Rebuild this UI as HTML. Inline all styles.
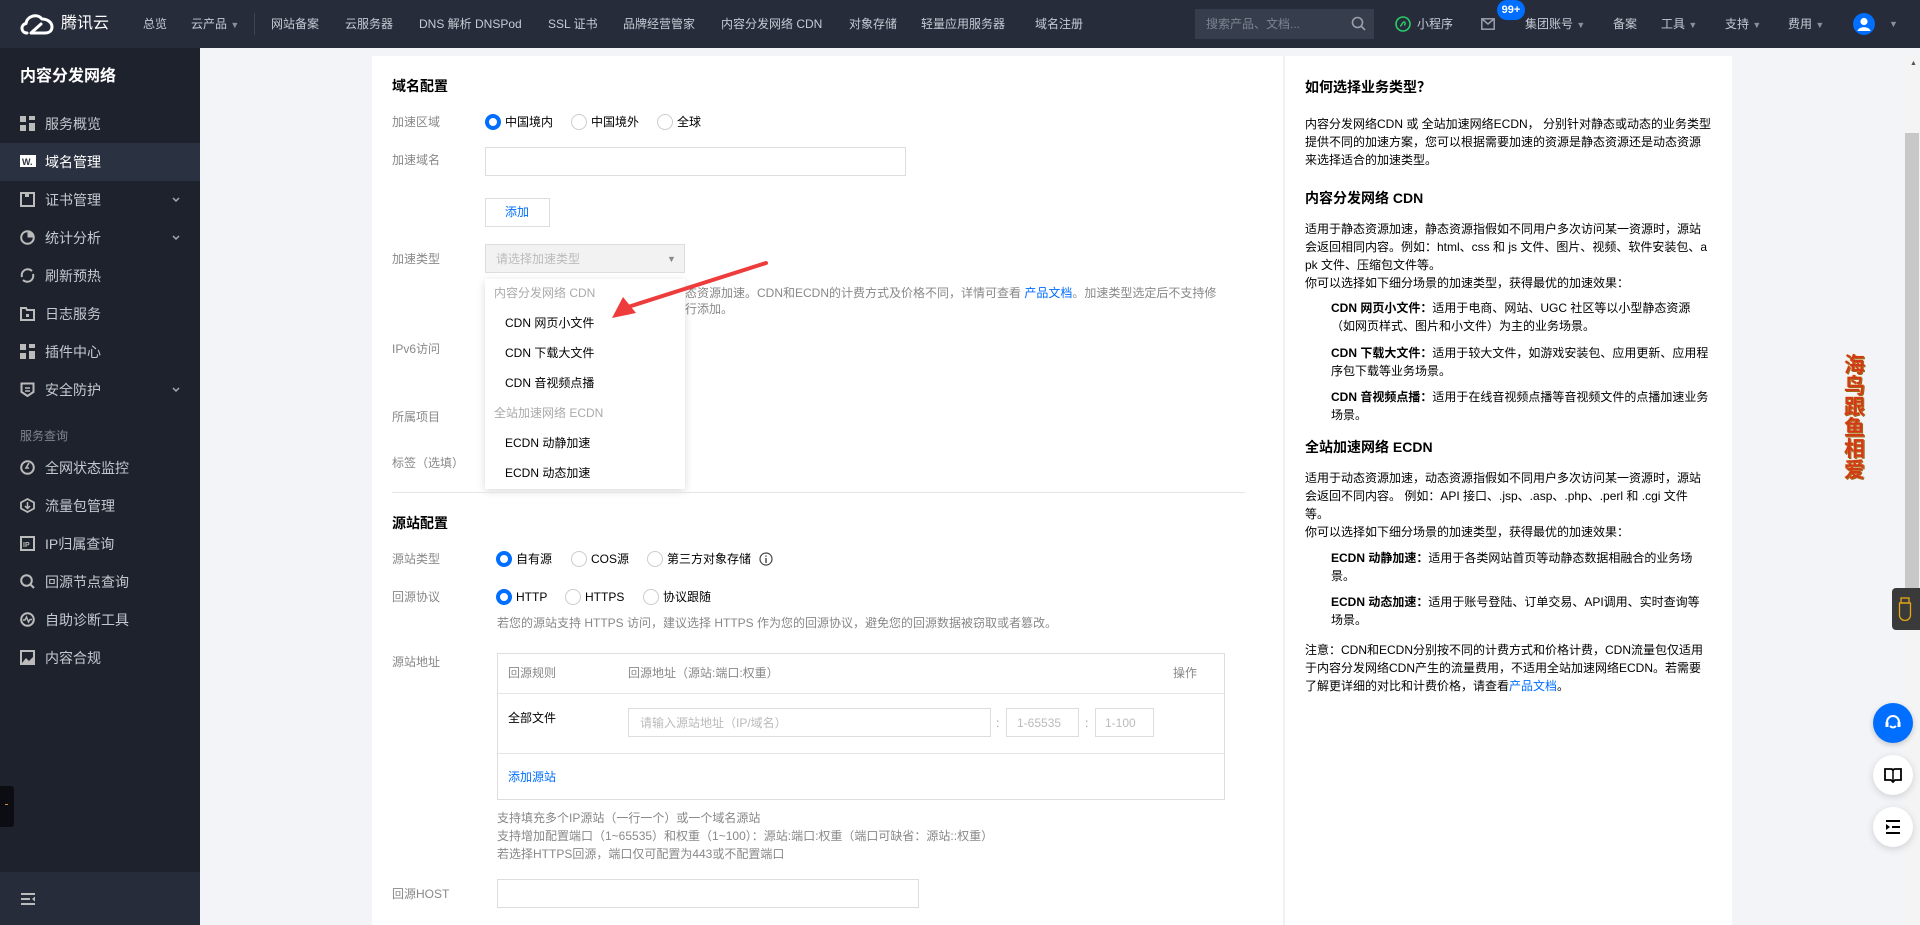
<!DOCTYPE html>
<html><head><meta charset="utf-8">
<style>
*{margin:0;padding:0;box-sizing:border-box}
body{width:1920px;height:925px;overflow:hidden;background:#f2f4f8;font-family:"Liberation Sans","Noto Sans CJK SC",sans-serif;font-size:12px;color:#000;position:relative}
.a{position:absolute;white-space:nowrap}
.top{position:absolute;left:0;top:0;width:1920px;height:48px;background:#262c3a}
.nv{position:absolute;top:17px;font-size:12px;color:#c6cad3;line-height:14px;white-space:nowrap}
.side{position:absolute;left:0;top:48px;width:200px;height:877px;background:#1e222d}
.si{position:absolute;left:0;width:200px;height:38px;color:#c4c8d0;font-size:14px;line-height:38px}
.si span{position:absolute;left:45px}
.si svg{position:absolute;left:20px;top:11px}
.si svg.ch{left:172px;top:16px}
.lbl{position:absolute;left:392px;color:#888;font-size:12px;line-height:14px;white-space:nowrap}
.rad{position:absolute;width:16px;height:16px;border:1px solid #ccc;border-radius:50%;background:#fff}
.rad.on{border:4px solid #006eff}
.rt{position:absolute;font-size:12px;line-height:14px;color:#000;white-space:nowrap}
.inp{position:absolute;border:1px solid #ddd;background:#fff}
.hp{position:absolute;left:1305px;font-size:12px;line-height:18px;color:#000;white-space:nowrap}
.hh{position:absolute;left:1305px;font-size:14px;font-weight:bold;color:#000;white-space:nowrap}
.dd{position:absolute;left:505px;font-size:12px;color:#000;white-space:nowrap;line-height:14px}
.ddg{position:absolute;left:494px;font-size:12px;color:#aaa;white-space:nowrap;line-height:14px}
.note{position:absolute;left:497px;font-size:12px;color:#888;white-space:nowrap;line-height:14px}
</style></head><body>

<div class="top"></div>
<svg class="a" style="left:19px;top:12px" width="36" height="24" viewBox="0 0 36 24"><path d="M8 21 C2 21 1 13 7 11.5 C8 4 18 1 23 7 C28 7 33 10 33 15 C33 19 30 21 26 21 L12 21 L22 12" fill="none" stroke="#fff" stroke-width="3" stroke-linecap="round" stroke-linejoin="round"/></svg>
<div class="a" style="left:61px;top:14px;color:#fff;font-size:16px;line-height:20px">腾讯云</div>
<div class="nv" style="left:143px">总览</div>
<div class="nv" style="left:191px">云产品 <span style="font-size:9px;color:#8a909b">▼</span></div>
<div class="a" style="left:254px;top:13px;width:1px;height:22px;background:#3e4553"></div>
<div class="nv" style="left:271px">网站备案</div>
<div class="nv" style="left:345px">云服务器</div>
<div class="nv" style="left:419px">DNS 解析 DNSPod</div>
<div class="nv" style="left:548px">SSL 证书</div>
<div class="nv" style="left:623px">品牌经营管家</div>
<div class="nv" style="left:721px">内容分发网络 CDN</div>
<div class="nv" style="left:849px">对象存储</div>
<div class="nv" style="left:921px">轻量应用服务器</div>
<div class="nv" style="left:1035px">域名注册</div>
<div class="a" style="left:1195px;top:9px;width:179px;height:30px;background:#363d4c"></div>
<div class="nv" style="left:1206px;color:#7d8491">搜索产品、文档...</div>
<svg class="a" style="left:1351px;top:16px" width="15" height="15" viewBox="0 0 15 15"><circle cx="6.5" cy="6.5" r="5" fill="none" stroke="#9aa0aa" stroke-width="1.6"/><path d="M10 10 L14 14" stroke="#9aa0aa" stroke-width="1.6"/></svg>
<svg class="a" style="left:1395px;top:16px" width="16" height="16" viewBox="0 0 16 16"><circle cx="8" cy="8" r="7" fill="none" stroke="#29cc6a" stroke-width="1.6"/><path d="M5 10 C7 10 7 6 9 6 C10.5 6 10.5 9 9 9" fill="none" stroke="#29cc6a" stroke-width="1.4"/></svg>
<div class="nv" style="left:1417px">小程序</div>
<svg class="a" style="left:1481px;top:18px" width="14" height="12" viewBox="0 0 14 12"><rect x="0.8" y="0.8" width="12.4" height="10.4" fill="none" stroke="#9aa0aa" stroke-width="1.5"/><path d="M1 1 L7 6 L13 1" fill="none" stroke="#9aa0aa" stroke-width="1.5"/></svg>
<div class="a" style="left:1497px;top:0px;width:28px;height:20px;border-radius:10px;background:#006eff;color:#fff;font-size:11px;font-weight:bold;line-height:20px;text-align:center">99+</div>
<div class="nv" style="left:1525px">集团账号 <span style="font-size:9px;color:#8a909b">▼</span></div>
<div class="nv" style="left:1613px">备案</div>
<div class="nv" style="left:1661px">工具 <span style="font-size:9px;color:#8a909b">▼</span></div>
<div class="nv" style="left:1725px">支持 <span style="font-size:9px;color:#8a909b">▼</span></div>
<div class="nv" style="left:1788px">费用 <span style="font-size:9px;color:#8a909b">▼</span></div>
<svg class="a" style="left:1853px;top:13px" width="22" height="22" viewBox="0 0 22 22"><circle cx="11" cy="11" r="11" fill="#006eff"/><circle cx="11" cy="8.5" r="3.6" fill="#fff"/><path d="M4.5 18 C5.5 13 16.5 13 17.5 18 Z" fill="#fff"/></svg>
<div class="nv" style="left:1889px;font-size:9px;color:#8a909b">▼</div>

<div class="side"></div>
<div class="a" style="left:20px;top:66px;color:#fff;font-size:16px;font-weight:bold;line-height:22px">内容分发网络</div>
<div class="si" style="top:105px"><svg width="15" height="15"><rect x="0" y="0" width="6" height="6" fill="#bbb"/><rect x="9" y="0" width="6" height="4" fill="#bbb"/><rect x="0" y="9" width="6" height="6" fill="#bbb"/><rect x="9" y="7" width="6" height="8" fill="#bbb"/></svg><span>服务概览</span></div>
<div class="si" style="top:143px;background:#2a3140;color:#fff"><svg width="16" height="15"><rect x="0" y="1" width="16" height="12" fill="#fff"/><text x="2" y="11" font-size="9" font-weight="bold" fill="#2a3140" font-family="Liberation Sans">W.</text></svg><span>域名管理</span></div>
<div class="si" style="top:181px"><svg width="15" height="15"><rect x="1" y="1" width="13" height="13" fill="none" stroke="#bbb" stroke-width="2"/><rect x="5" y="1" width="4" height="4" fill="#bbb"/></svg><span>证书管理</span><svg class="ch" width="8" height="6"><path d="M1 1 L4 4 L7 1" fill="none" stroke="#aaa" stroke-width="1.5"/></svg></div>
<div class="si" style="top:219px"><svg width="15" height="15"><circle cx="7.5" cy="7.5" r="6.3" fill="none" stroke="#bbb" stroke-width="2"/><path d="M7.5 7.5 L7.5 1 A6.5 6.5 0 0 1 14 7.5Z" fill="#bbb"/></svg><span>统计分析</span><svg class="ch" width="8" height="6"><path d="M1 1 L4 4 L7 1" fill="none" stroke="#aaa" stroke-width="1.5"/></svg></div>
<div class="si" style="top:257px"><svg width="15" height="15"><path d="M2 9 A6 6 0 0 1 12 3 M13 6 A6 6 0 0 1 3 12" fill="none" stroke="#bbb" stroke-width="2"/></svg><span>刷新预热</span></div>
<div class="si" style="top:295px"><svg width="15" height="15"><path d="M1 2 H6 L7 4 H14 V14 H1Z" fill="none" stroke="#bbb" stroke-width="2"/><rect x="6" y="8" width="3" height="3" fill="#bbb"/></svg><span>日志服务</span></div>
<div class="si" style="top:333px"><svg width="15" height="15"><rect x="0" y="0" width="6" height="6" fill="#bbb"/><rect x="9" y="0" width="6" height="4" fill="#bbb"/><rect x="0" y="9" width="6" height="6" fill="#bbb"/><rect x="9" y="7" width="6" height="8" fill="#bbb"/></svg><span>插件中心</span></div>
<div class="si" style="top:371px"><svg width="15" height="15"><path d="M1.5 1.5 H13.5 V10 L7.5 14 L1.5 10Z" fill="none" stroke="#bbb" stroke-width="2"/><path d="M5 6 H10 M5 9 H10" stroke="#bbb" stroke-width="1.5"/></svg><span>安全防护</span><svg class="ch" width="8" height="6"><path d="M1 1 L4 4 L7 1" fill="none" stroke="#aaa" stroke-width="1.5"/></svg></div>
<div class="a" style="left:20px;top:428px;color:#7f8590;font-size:12px;line-height:16px">服务查询</div>
<div class="si" style="top:449px"><svg width="15" height="15"><circle cx="7.5" cy="7.5" r="6.3" fill="none" stroke="#bbb" stroke-width="2"/><path d="M9 3 L6 8 H9" fill="none" stroke="#bbb" stroke-width="1.6"/></svg><span>全网状态监控</span></div>
<div class="si" style="top:487px"><svg width="15" height="15"><path d="M7.5 1 L14 4.5 V10.5 L7.5 14 L1 10.5 V4.5Z" fill="none" stroke="#bbb" stroke-width="1.8"/><path d="M7.5 4 V10 M5 8 L7.5 10.5 L10 8" fill="none" stroke="#bbb" stroke-width="1.5"/></svg><span>流量包管理</span></div>
<div class="si" style="top:525px"><svg width="15" height="15"><rect x="1" y="1" width="13" height="13" fill="none" stroke="#bbb" stroke-width="2"/><text x="3" y="11" font-size="7" font-weight="bold" fill="#bbb" font-family="Liberation Sans">IP</text></svg><span>IP归属查询</span></div>
<div class="si" style="top:563px"><svg width="15" height="15"><circle cx="6.5" cy="6.5" r="5.3" fill="none" stroke="#bbb" stroke-width="2"/><path d="M10.5 10.5 L14 14" stroke="#bbb" stroke-width="2"/></svg><span>回源节点查询</span></div>
<div class="si" style="top:601px"><svg width="15" height="15"><circle cx="7.5" cy="7.5" r="6.3" fill="none" stroke="#bbb" stroke-width="2"/><path d="M3 8 H5 L6.5 5 L8.5 10 L10 7.5 H12" fill="none" stroke="#bbb" stroke-width="1.4"/></svg><span>自助诊断工具</span></div>
<div class="si" style="top:639px"><svg width="15" height="15"><rect x="1" y="1" width="13" height="13" fill="none" stroke="#bbb" stroke-width="2"/><path d="M2 13 L6 8 L9 11 L13 7 V13Z" fill="#bbb"/></svg><span>内容合规</span></div>
<div class="a" style="left:0;top:786px;width:14px;height:41px;background:#0b0d12;border-radius:0 3px 3px 0"></div>
<div class="a" style="left:5px;top:804px;width:3px;height:1px;background:#d98c3a"></div>
<div class="a" style="left:0;top:872px;width:200px;height:53px;background:#262c39"></div>
<svg class="a" style="left:20px;top:892px" width="16" height="14"><path d="M1 2 H15 M1 7 H10 M1 12 H15" stroke="#bbb" stroke-width="2"/><path d="M15 4.5 L12 7 L15 9.5Z" fill="#bbb"/></svg>

<!-- card -->
<div class="a" style="left:372px;top:56px;width:1360px;height:869px;background:#fff"></div>
<div class="a" style="left:1283px;top:56px;width:2px;height:869px;background:#f0f1f4"></div>

<div class="a" style="left:392px;top:77px;font-size:14px;font-weight:bold;line-height:18px">域名配置</div>
<div class="lbl" style="top:115px">加速区域</div>
<div class="rad on" style="left:485px;top:114px"></div><div class="rt" style="left:505px;top:115px">中国境内</div>
<div class="rad" style="left:571px;top:114px"></div><div class="rt" style="left:591px;top:115px">中国境外</div>
<div class="rad" style="left:657px;top:114px"></div><div class="rt" style="left:677px;top:115px">全球</div>
<div class="lbl" style="top:153px">加速域名</div>
<div class="inp" style="left:485px;top:147px;width:421px;height:29px"></div>
<div class="inp" style="left:485px;top:198px;width:65px;height:29px"></div>
<div class="a" style="left:505px;top:205px;color:#006eff;font-size:12px;line-height:14px">添加</div>
<div class="lbl" style="top:252px">加速类型</div>
<div class="a" style="left:485px;top:244px;width:200px;height:29px;background:#f2f2f2;border:1px solid #ddd"></div>
<div class="a" style="left:496px;top:252px;color:#bbb;font-size:12px;line-height:14px">请选择加速类型</div>
<div class="a" style="left:667px;top:252px;color:#888;font-size:9px;line-height:14px">▼</div>
<div class="note" style="left:685px;top:286px;color:#888">态资源加速。CDN和ECDN的计费方式及价格不同，详情可查看 <span style="color:#006eff">产品文档</span>。加速类型选定后不支持修</div>
<div class="note" style="left:685px;top:302px">行添加。</div>
<div class="lbl" style="top:342px">IPv6访问</div>
<div class="lbl" style="top:410px">所属项目</div>
<div class="lbl" style="top:456px">标签（选填）</div>

<div class="a" style="left:485px;top:279px;width:200px;height:210px;background:#fff;box-shadow:0 2px 8px rgba(0,0,0,0.15)"></div>
<div class="ddg" style="top:286px">内容分发网络 CDN</div>
<div class="dd" style="top:316px">CDN 网页小文件</div>
<div class="dd" style="top:346px">CDN 下载大文件</div>
<div class="dd" style="top:376px">CDN 音视频点播</div>
<div class="ddg" style="top:406px">全站加速网络 ECDN</div>
<div class="dd" style="top:436px">ECDN 动静加速</div>
<div class="dd" style="top:466px">ECDN 动态加速</div>

<svg class="a" style="left:600px;top:255px" width="175" height="75" viewBox="600 255 175 75"><path d="M766 263 L628 307" stroke="#ee3b3b" stroke-width="4" stroke-linecap="round"/><path d="M612 318 L623 297 L636 313Z" fill="#ee3b3b"/></svg>

<div class="a" style="left:392px;top:492px;width:853px;height:1px;background:#e5e5e5"></div>

<div class="a" style="left:392px;top:514px;font-size:14px;font-weight:bold;line-height:18px">源站配置</div>
<div class="lbl" style="top:552px">源站类型</div>
<div class="rad on" style="left:496px;top:551px"></div><div class="rt" style="left:516px;top:552px">自有源</div>
<div class="rad" style="left:571px;top:551px"></div><div class="rt" style="left:591px;top:552px">COS源</div>
<div class="rad" style="left:647px;top:551px"></div><div class="rt" style="left:667px;top:552px">第三方对象存储</div>
<svg class="a" style="left:759px;top:552px" width="14" height="14"><circle cx="7" cy="7" r="6" fill="none" stroke="#444" stroke-width="1.2"/><path d="M7 6 V11 M7 3.5 V4.8" stroke="#444" stroke-width="1.4"/></svg>
<div class="lbl" style="top:590px">回源协议</div>
<div class="rad on" style="left:496px;top:589px"></div><div class="rt" style="left:516px;top:590px">HTTP</div>
<div class="rad" style="left:565px;top:589px"></div><div class="rt" style="left:585px;top:590px">HTTPS</div>
<div class="rad" style="left:643px;top:589px"></div><div class="rt" style="left:663px;top:590px">协议跟随</div>
<div class="note" style="top:616px">若您的源站支持 HTTPS 访问，建议选择 HTTPS 作为您的回源协议，避免您的回源数据被窃取或者篡改。</div>
<div class="lbl" style="top:655px">源站地址</div>
<div class="a" style="left:497px;top:653px;width:728px;height:147px;border:1px solid #ddd"></div>
<div class="a" style="left:498px;top:693px;width:726px;height:1px;background:#e5e5e5"></div>
<div class="a" style="left:498px;top:753px;width:726px;height:1px;background:#e5e5e5"></div>
<div class="note" style="left:508px;top:666px">回源规则</div>
<div class="note" style="left:628px;top:666px">回源地址（源站:端口:权重）</div>
<div class="note" style="left:1173px;top:666px">操作</div>
<div class="rt" style="left:508px;top:711px">全部文件</div>
<div class="inp" style="left:628px;top:708px;width:363px;height:29px"></div>
<div class="a" style="left:640px;top:716px;color:#bbb;font-size:12px;line-height:14px">请输入源站地址（IP/域名）</div>
<div class="a" style="left:996px;top:716px;color:#999;font-size:12px;line-height:14px">:</div>
<div class="inp" style="left:1006px;top:708px;width:73px;height:29px"></div>
<div class="a" style="left:1017px;top:716px;color:#bbb;font-size:12px;line-height:14px">1-65535</div>
<div class="a" style="left:1085px;top:716px;color:#999;font-size:12px;line-height:14px">:</div>
<div class="inp" style="left:1095px;top:708px;width:59px;height:29px"></div>
<div class="a" style="left:1105px;top:716px;color:#bbb;font-size:12px;line-height:14px">1-100</div>
<div class="a" style="left:508px;top:770px;color:#006eff;font-size:12px;line-height:14px">添加源站</div>
<div class="note" style="top:811px">支持填充多个IP源站（一行一个）或一个域名源站</div>
<div class="note" style="top:829px">支持增加配置端口（1~65535）和权重（1~100）：源站:端口:权重（端口可缺省：源站::权重）</div>
<div class="note" style="top:847px">若选择HTTPS回源，端口仅可配置为443或不配置端口</div>
<div class="lbl" style="top:887px">回源HOST</div>
<div class="inp" style="left:497px;top:879px;width:422px;height:29px"></div>

<!-- help -->
<div class="hh" style="top:77px">如何选择业务类型？</div>
<div class="hp" style="top:115px">内容分发网络CDN 或 全站加速网络ECDN， 分别针对静态或动态的业务类型</div>
<div class="hp" style="top:133px">提供不同的加速方案，您可以根据需要加速的资源是静态资源还是动态资源</div>
<div class="hp" style="top:151px">来选择适合的加速类型。</div>
<div class="hh" style="top:188px">内容分发网络 CDN</div>
<div class="hp" style="top:220px">适用于静态资源加速，静态资源指假如不同用户多次访问某一资源时，源站</div>
<div class="hp" style="top:238px">会返回相同内容。例如：html、css 和 js 文件、图片、视频、软件安装包、a</div>
<div class="hp" style="top:256px">pk 文件、压缩包文件等。</div>
<div class="hp" style="top:274px">你可以选择如下细分场景的加速类型，获得最优的加速效果：</div>
<div class="hp" style="left:1331px;top:299px"><b>CDN 网页小文件：</b>适用于电商、网站、UGC 社区等以小型静态资源</div>
<div class="hp" style="left:1331px;top:317px">（如网页样式、图片和小文件）为主的业务场景。</div>
<div class="hp" style="left:1331px;top:344px"><b>CDN 下载大文件：</b>适用于较大文件，如游戏安装包、应用更新、应用程</div>
<div class="hp" style="left:1331px;top:362px">序包下载等业务场景。</div>
<div class="hp" style="left:1331px;top:388px"><b>CDN 音视频点播：</b>适用于在线音视频点播等音视频文件的点播加速业务</div>
<div class="hp" style="left:1331px;top:406px">场景。</div>
<div class="hh" style="top:437px">全站加速网络 ECDN</div>
<div class="hp" style="top:469px">适用于动态资源加速，动态资源指假如不同用户多次访问某一资源时，源站</div>
<div class="hp" style="top:487px">会返回不同内容。 例如：API 接口、.jsp、.asp、.php、.perl 和 .cgi 文件</div>
<div class="hp" style="top:505px">等。</div>
<div class="hp" style="top:523px">你可以选择如下细分场景的加速类型，获得最优的加速效果：</div>
<div class="hp" style="left:1331px;top:549px"><b>ECDN 动静加速：</b>适用于各类网站首页等动静态数据相融合的业务场</div>
<div class="hp" style="left:1331px;top:567px">景。</div>
<div class="hp" style="left:1331px;top:593px"><b>ECDN 动态加速：</b>适用于账号登陆、订单交易、API调用、实时查询等</div>
<div class="hp" style="left:1331px;top:611px">场景。</div>
<div class="hp" style="top:641px">注意：CDN和ECDN分别按不同的计费方式和价格计费，CDN流量包仅适用</div>
<div class="hp" style="top:659px">于内容分发网络CDN产生的流量费用，不适用全站加速网络ECDN。若需要</div>
<div class="hp" style="top:677px">了解更详细的对比和计费价格，请查看<span style="color:#006eff">产品文档</span>。</div>

<!-- right side -->
<div class="a" style="left:1904px;top:56px;width:16px;height:869px;background:#f4f4f4"></div>
<div class="a" style="left:1905px;top:133px;width:14px;height:457px;background:#c8c8c8"></div>
<div class="a" style="left:1910px;top:60px;font-size:7px;color:#555">▲</div>
<div class="a" style="left:1844px;top:355px;width:24px;font-size:21px;line-height:21px;font-weight:bold;color:#d03a1a;white-space:normal;text-shadow:0 0 1px #f5c030,1px 1px 0 #8a5a10">海鸟跟鱼相爱</div>
<div class="a" style="left:1892px;top:588px;width:28px;height:42px;background:#3a3a3a;border-radius:4px 0 0 4px"></div>
<svg class="a" style="left:1898px;top:597px" width="14" height="24"><rect x="3" y="1" width="8" height="5" fill="none" stroke="#e6a817" stroke-width="1.3"/><path d="M1.5 6 H12.5 V18 A5.5 5.5 0 0 1 1.5 18Z" fill="none" stroke="#e6a817" stroke-width="1.3"/></svg>
<div class="a" style="left:1873px;top:703px;width:40px;height:40px;border-radius:50%;background:#006eff;box-shadow:0 2px 6px rgba(0,0,0,0.2)"></div>
<svg class="a" style="left:1883px;top:713px" width="20" height="20"><path d="M4 12 V9 A6 6 0 0 1 16 9 V12" fill="none" stroke="#fff" stroke-width="2"/><path d="M7 13 Q10 16 13 13" fill="none" stroke="#fff" stroke-width="2"/><rect x="2.5" y="9" width="3" height="5" fill="#fff"/><rect x="14.5" y="9" width="3" height="5" fill="#fff"/></svg>
<div class="a" style="left:1873px;top:755px;width:40px;height:40px;border-radius:50%;background:#fff;box-shadow:0 2px 8px rgba(0,0,0,0.15)"></div>
<svg class="a" style="left:1884px;top:767px" width="18" height="16"><path d="M1 2 H7 Q9 2 9 4 Q9 2 11 2 H17 V13 H11 L9 15 L7 13 H1Z" fill="none" stroke="#000" stroke-width="1.8"/><path d="M9 4 V14" stroke="#000" stroke-width="1.5"/></svg>
<div class="a" style="left:1873px;top:807px;width:40px;height:40px;border-radius:50%;background:#fff;box-shadow:0 2px 8px rgba(0,0,0,0.15)"></div>
<svg class="a" style="left:1885px;top:819px" width="16" height="16"><path d="M1 2 H15 M7 8 H15 M1 14 H15" stroke="#000" stroke-width="2"/><path d="M1 5 L5 8 L1 11Z" fill="#000"/></svg>
</body></html>
